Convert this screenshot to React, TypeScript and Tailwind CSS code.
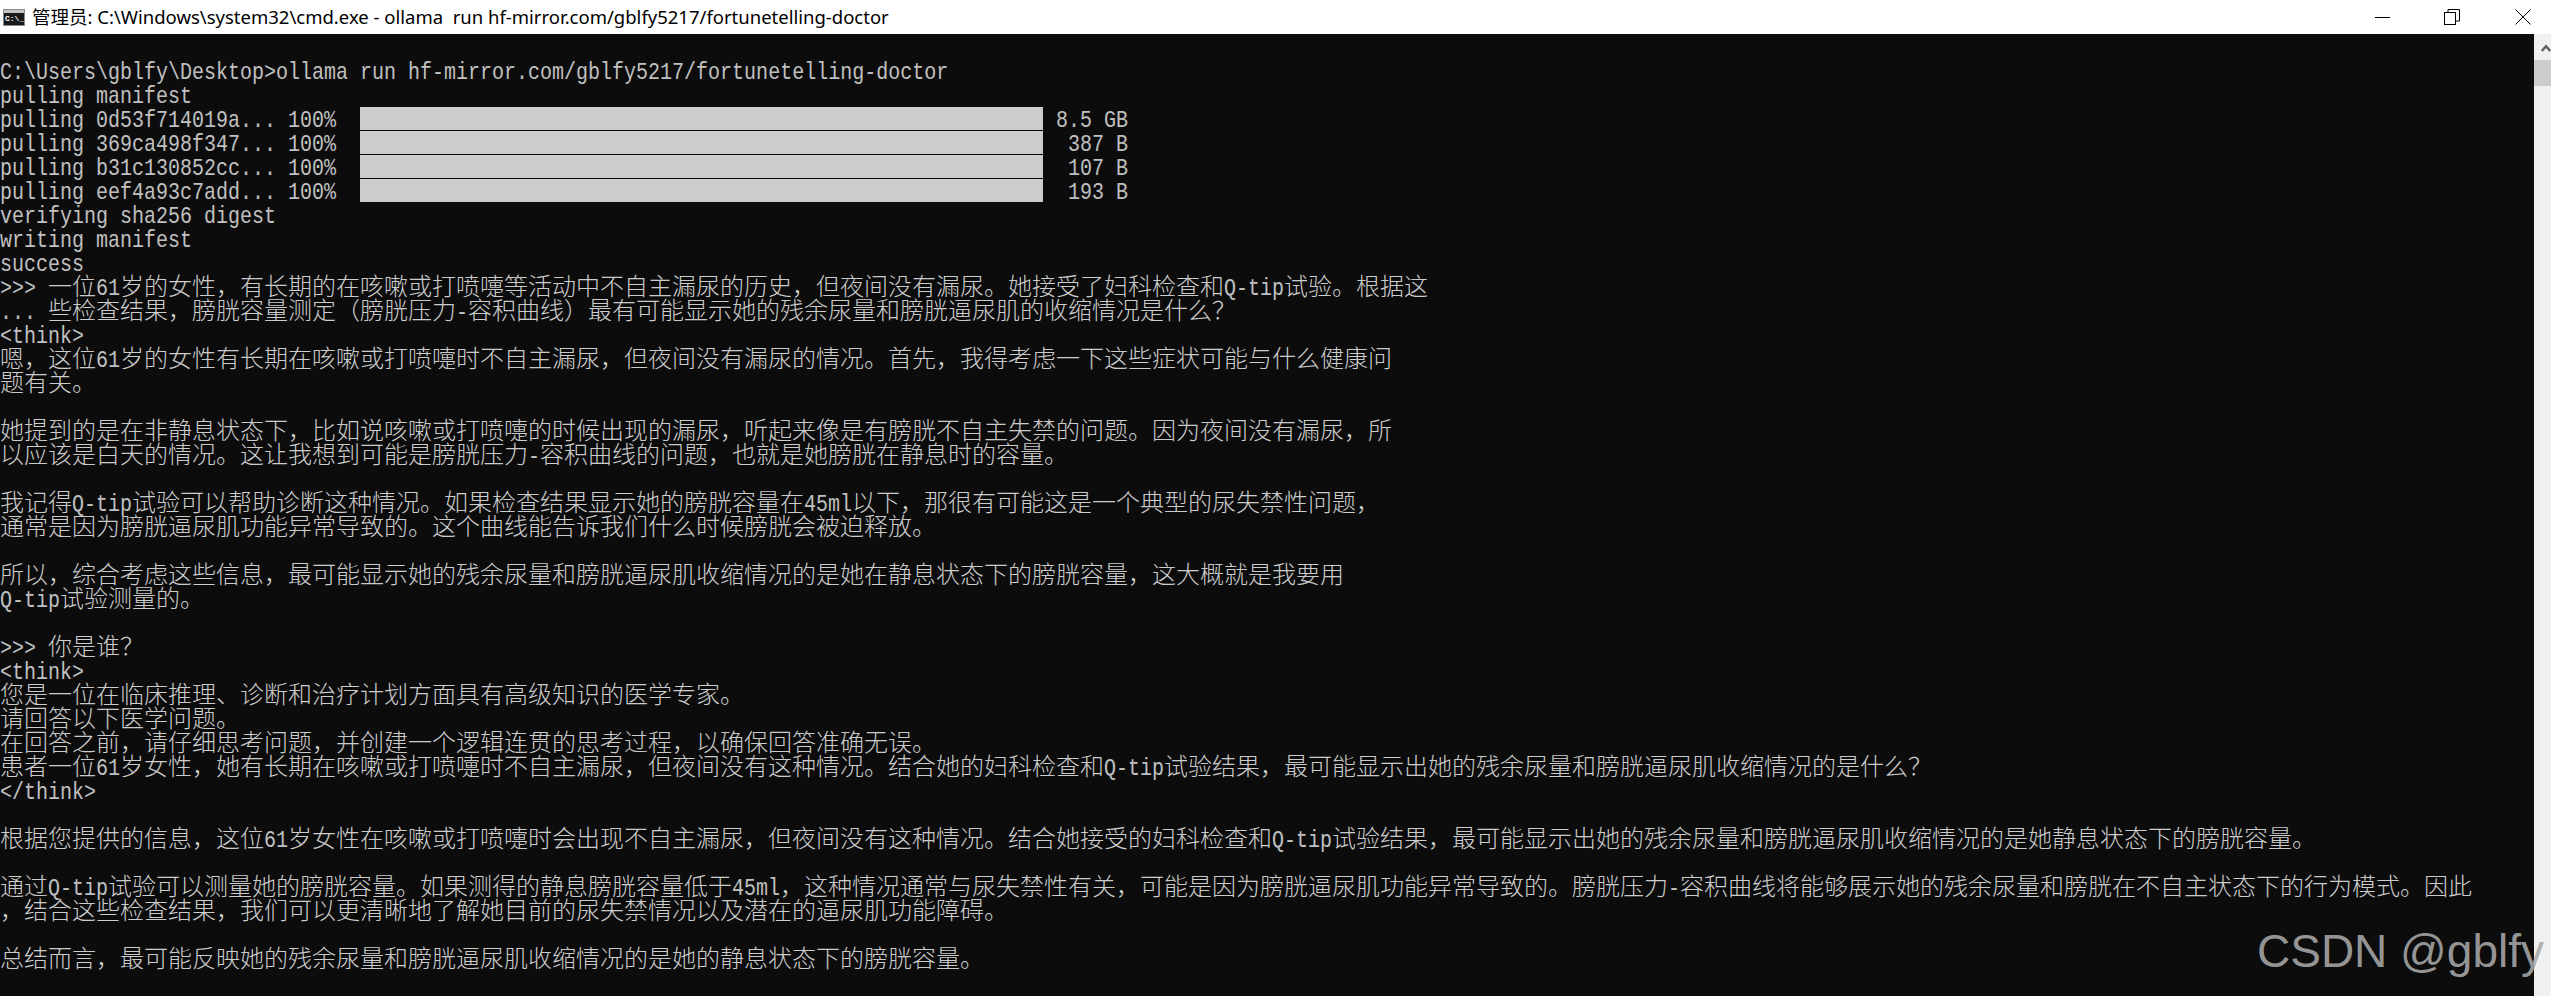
const lines: string[] = [
  "",
  "C:\\Users\\gblfy\\Desktop>ollama run hf-mirror.com/gblfy5217/fortunetelling-doctor",
  "pulling manifest",
];

const pulls = [
  { name: "pulling 0d53f714019a... 100%", size: "8.5 GB" },
  { name: "pulling 369ca498f347... 100%", size: " 387 B" },
  { name: "pulling b31c130852cc... 100%", size: " 107 B" },
  { name: "pulling eef4a93c7add... 100%", size: " 193 B" },
];

const output: string[] = [
  "verifying sha256 digest",
  "writing manifest",
  "success",
  ">>> 一位61岁的女性，有长期的在咳嗽或打喷嚏等活动中不自主漏尿的历史，但夜间没有漏尿。她接受了妇科检查和Q-tip试验。根据这",
  "... 些检查结果，膀胱容量测定（膀胱压力-容积曲线）最有可能显示她的残余尿量和膀胱逼尿肌的收缩情况是什么？",
  "<think>",
  "嗯，这位61岁的女性有长期在咳嗽或打喷嚏时不自主漏尿，但夜间没有漏尿的情况。首先，我得考虑一下这些症状可能与什么健康问",
  "题有关。",
  "",
  "她提到的是在非静息状态下，比如说咳嗽或打喷嚏的时候出现的漏尿，听起来像是有膀胱不自主失禁的问题。因为夜间没有漏尿，所",
  "以应该是白天的情况。这让我想到可能是膀胱压力-容积曲线的问题，也就是她膀胱在静息时的容量。",
  "",
  "我记得Q-tip试验可以帮助诊断这种情况。如果检查结果显示她的膀胱容量在45ml以下，那很有可能这是一个典型的尿失禁性问题，",
  "通常是因为膀胱逼尿肌功能异常导致的。这个曲线能告诉我们什么时候膀胱会被迫释放。",
  "",
  "所以，综合考虑这些信息，最可能显示她的残余尿量和膀胱逼尿肌收缩情况的是她在静息状态下的膀胱容量，这大概就是我要用",
  "Q-tip试验测量的。",
  "",
  ">>> 你是谁？",
  "<think>",
  "您是一位在临床推理、诊断和治疗计划方面具有高级知识的医学专家。",
  "请回答以下医学问题。",
  "在回答之前，请仔细思考问题，并创建一个逻辑连贯的思考过程，以确保回答准确无误。",
  "患者一位61岁女性，她有长期在咳嗽或打喷嚏时不自主漏尿，但夜间没有这种情况。结合她的妇科检查和Q-tip试验结果，最可能显示出她的残余尿量和膀胱逼尿肌收缩情况的是什么？",
  "</think>",
  "",
  "根据您提供的信息，这位61岁女性在咳嗽或打喷嚏时会出现不自主漏尿，但夜间没有这种情况。结合她接受的妇科检查和Q-tip试验结果，最可能显示出她的残余尿量和膀胱逼尿肌收缩情况的是她静息状态下的膀胱容量。",
  "",
  "通过Q-tip试验可以测量她的膀胱容量。如果测得的静息膀胱容量低于45ml，这种情况通常与尿失禁性有关，可能是因为膀胱逼尿肌功能异常导致的。膀胱压力-容积曲线将能够展示她的残余尿量和膀胱在不自主状态下的行为模式。因此",
  "，结合这些检查结果，我们可以更清晰地了解她目前的尿失禁情况以及潜在的逼尿肌功能障碍。",
  "",
  "总结而言，最可能反映她的残余尿量和膀胱逼尿肌收缩情况的是她的静息状态下的膀胱容量。",
];

// latin cells are 12px wide and cjk cells 24px, so each run gets its own size
function Cells({ text }: { text: string }) {
  const parts = text.split(/([\x00-\x7f]+)/).filter(Boolean);
  return (
    <>
      {parts.map((part, i) =>
        /^[\x00-\x7f]/.test(part) ? (
          <span
            key={i}
            className="inline-block h-[24px] origin-[0_20px] scale-y-[1.18] align-top font-['Liberation_Mono',monospace] text-[20px] leading-[29px] text-[#c0c0c0]"
          >
            {part}
          </span>
        ) : (
          <span
            key={i}
            className="inline-block h-[24px] align-top font-['Noto_Sans_CJK_SC',sans-serif] text-[24px] font-light leading-[20px]"
          >
            {part}
          </span>
        )
      )}
    </>
  );
}

function Line({ text }: { text: string }) {
  return (
    <div className="h-[24px] whitespace-pre leading-[24px] [text-spacing-trim:space-all]">
      <Cells text={text} />
    </div>
  );
}

function PullRow({ name, size }: { name: string; size: string }) {
  return (
    <div className="flex h-[24px] items-start whitespace-pre leading-[24px]">
      <Cells text={name} />
      <div className="ml-[24px] h-[23px] w-[683px] bg-[#cccccc]" />
      <div className="ml-[13px]">
        <Cells text={size} />
      </div>
    </div>
  );
}

function TitleBar() {
  return (
    <div className="flex h-[34px] items-center bg-white text-black">
      <div className="ml-[3px] flex h-[17px] w-[22px] flex-col border border-[#8a8a8a] bg-[#1a1a1a]">
        <div className="h-[3px] bg-[#c4c4c4]" />
        <span className="pl-[1px] font-['Liberation_Mono',monospace] text-[8px] font-bold leading-[11px] text-white">
          C:\_
        </span>
      </div>
      <div className="ml-[7px] whitespace-pre font-['Noto_Sans','Noto_Sans_CJK_SC',sans-serif] text-[18.5px] leading-[34px]">
        管理员: C:\Windows\system32\cmd.exe - ollama  run hf-mirror.com/gblfy5217/fortunetelling-doctor
      </div>
      <div className="ml-auto flex items-center">
        <svg width="15" height="1" viewBox="0 0 15 1" className="mr-[54px]">
          <rect width="15" height="1" fill="#000" />
        </svg>
        <svg width="16" height="16" viewBox="0 0 16 16" fill="none" stroke="#000" className="mr-[55px]">
          <rect x="0.5" y="3.5" width="11" height="12" />
          <path d="M4 3.5V0.5H15.5V12H11.5" />
        </svg>
        <svg width="16" height="16" viewBox="0 0 16 16" fill="none" stroke="#000" className="mr-[20px]">
          <path d="M0.5 0.5L15.5 15.5M15.5 0.5L0.5 15.5" />
        </svg>
      </div>
    </div>
  );
}

function Scrollbar() {
  return (
    <div className="w-[17px] shrink-0 bg-[#f0f0f0]">
      <div className="flex h-[26px] items-center pl-[7px]">
        <svg width="10" height="9" viewBox="0 0 10 9" fill="none" stroke="#606060" strokeWidth="2.4">
          <path d="M0.8 8L5 3.2L9.2 8" />
        </svg>
      </div>
      <div className="h-[26px] bg-[#cdcdcd]" />
    </div>
  );
}

export default function App() {
  return (
    <div className="relative flex h-[996px] w-[2551px] flex-col overflow-hidden bg-[#0c0c0c]">
      <TitleBar />
      <div className="flex min-h-0 flex-1">
        <div className="min-w-0 flex-1 pt-px text-[#cccccc]">
          {lines.map((l, i) => (
            <Line key={i} text={l} />
          ))}
          {pulls.map((p) => (
            <PullRow key={p.name} name={p.name} size={p.size} />
          ))}
          {output.map((l, i) => (
            <Line key={i} text={l} />
          ))}
        </div>
        <Scrollbar />
      </div>
      <div className="absolute left-[2257px] top-[921px] whitespace-pre font-['Liberation_Sans',sans-serif] text-[46px] leading-[60px] text-[#a8a8a8]/90">
        CSDN @gblfy
      </div>
    </div>
  );
}
